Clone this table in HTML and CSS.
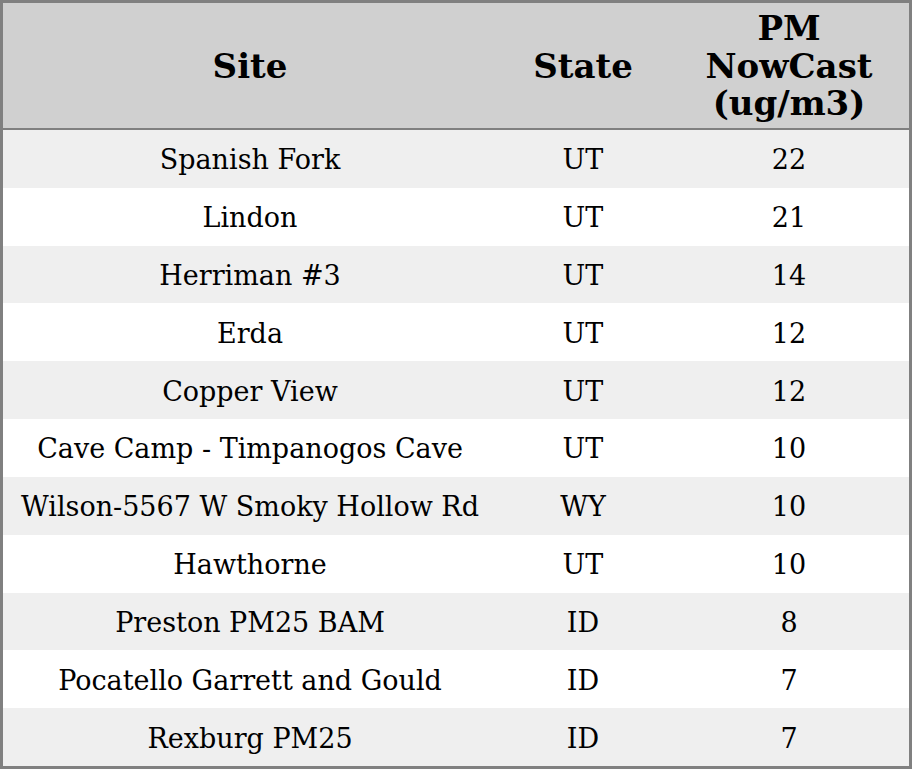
FILE: index.html
```html
<!DOCTYPE html>
<html>
<head>
<meta charset="utf-8">
<link rel="stylesheet" href="styles.css">
</head>
<body>
<table class="aq">
  <colgroup>
    <col class="c-site">
    <col class="c-state">
    <col class="c-pm">
  </colgroup>
  <thead>
    <tr><th>Site</th><th>State</th><th>PM<br>NowCast<br>(ug/m3)</th></tr>
  </thead>
  <tbody>
    <tr><td>Spanish Fork</td><td>UT</td><td>22</td></tr>
    <tr><td>Lindon</td><td>UT</td><td>21</td></tr>
    <tr><td>Herriman #3</td><td>UT</td><td>14</td></tr>
    <tr><td>Erda</td><td>UT</td><td>12</td></tr>
    <tr><td>Copper View</td><td>UT</td><td>12</td></tr>
    <tr><td>Cave Camp - Timpanogos Cave</td><td>UT</td><td>10</td></tr>
    <tr><td>Wilson-5567 W Smoky Hollow Rd</td><td>WY</td><td>10</td></tr>
    <tr><td>Hawthorne</td><td>UT</td><td>10</td></tr>
    <tr><td>Preston PM25 BAM</td><td>ID</td><td>8</td></tr>
    <tr><td>Pocatello Garrett and Gould</td><td>ID</td><td>7</td></tr>
    <tr><td>Rexburg PM25</td><td>ID</td><td>7</td></tr>
  </tbody>
</table>
</body>
</html>
```
FILE: styles.css
```css
html, body {
  margin: 0;
  padding: 0;
  background: #ffffff;
}
.aq {
  width: 912px;
  height: 769px;
  border-collapse: separate;
  border-spacing: 0;
  border: 3px solid #808080;
  box-sizing: border-box;
  font-family: "DejaVu Serif", serif;
  color: #000;
  table-layout: fixed;
}
.c-site { width: 494px; }
.c-state { width: 172px; }
.c-pm { width: 240px; }
.aq th {
  background: #d0d0d0;
  font-weight: bold;
  font-size: 34px;
  line-height: 37.5px;
  height: 123px;
  padding: 2px 0 0 0;
  text-align: center;
  vertical-align: middle;
  border-bottom: 2px solid #808080;
}
.aq td {
  font-size: 27px;
  height: 55.8px;
  padding: 2px 0 0 0;
  text-align: center;
  vertical-align: middle;
}
.aq tbody tr:nth-child(odd) td { background: #efefef; }
.aq tbody tr:nth-child(even) td { background: #ffffff; }
```
